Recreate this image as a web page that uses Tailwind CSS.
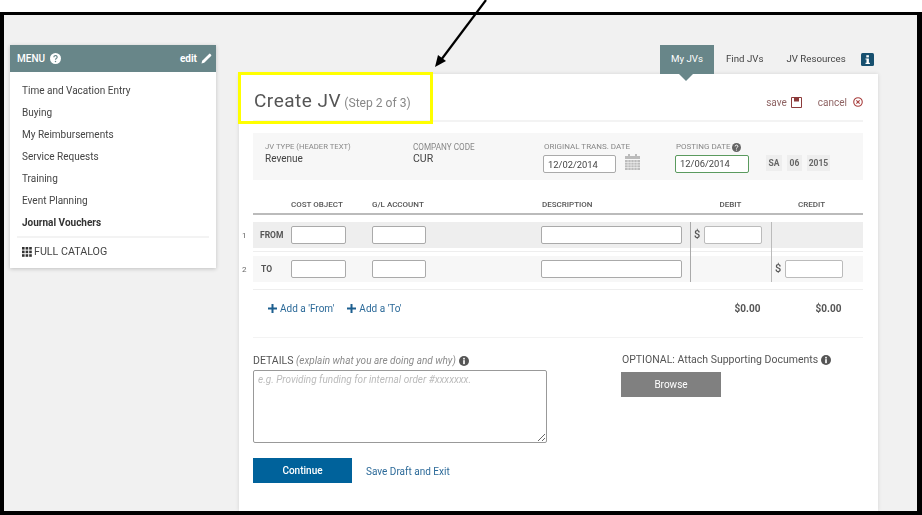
<!DOCTYPE html>
<html lang="en">
<head>
  <meta charset="UTF-8" />
  <meta name="viewport" content="width=device-width, initial-scale=1.0" />
  <title>Create JV</title>
  <script src="https://cdn.jsdelivr.net/npm/@tailwindcss/browser@4"></script>
</head>
<body class="bg-white font-['Roboto',sans-serif] text-[#444]">
<div class="relative w-[922px] h-[515px] overflow-hidden">

  <div class="mt-[12px] h-[503px] border-t-[3px] border-l-[4px] border-r-[5px] border-b-[4px] border-black bg-[#f1f1f1] flex items-start pl-[6px] pt-[30px] gap-[23px]">

    <!-- sidebar -->
    <aside class="w-[206px] bg-white shadow-[0_1px_4px_rgba(0,0,0,0.2)] blur-[0.3px]">
      <div class="h-[27px] bg-[#688689] flex items-center justify-between pl-[7px] pr-[4px] text-white text-[10px]">
        <div class="flex items-center gap-[5px]">
          <span class="font-medium">MENU</span>
          <svg class="w-[11px] h-[11px]" viewBox="0 0 12 12"><circle cx="6" cy="6" r="6" fill="#fff"/><path d="M4.2 4.6a1.8 1.8 0 1 1 2.7 1.5c-.6.4-.9.6-.9 1.3" fill="none" stroke="#688689" stroke-width="1.3"/><circle cx="6" cy="9.3" r=".8" fill="#688689"/></svg>
        </div>
        <div class="flex items-center gap-[4px] font-bold text-[10px]">
          <span>edit</span>
          <svg class="w-[11px] h-[11px]" viewBox="0 0 12 12"><path d="M0.5 11.5l.8-3L8.8 1a1 1 0 0 1 1.4 0l.8.8a1 1 0 0 1 0 1.4L3.5 10.7z" fill="#fff"/></svg>
        </div>
      </div>
      <nav class="px-[12px] pt-[8px] pb-[10px] text-[10px]">
        <ul class="leading-[22px]">
          <li>Time and Vacation Entry</li>
          <li>Buying</li>
          <li>My Reimbursements</li>
          <li>Service Requests</li>
          <li>Training</li>
          <li>Event Planning</li>
          <li class="font-bold text-[#333]">Journal Vouchers</li>
        </ul>
        <div class="border-t-2 border-[#f3f3f3] -mx-[5px] mt-[2px] pt-[8px] flex items-center gap-[2px] h-[22px] text-[10.7px]">
          <svg class="w-[10px] h-[10px] ml-[5px]" viewBox="0 0 10 10" fill="#333"><rect x="0" y="0" width="2.6" height="2.6"/><rect x="3.6" y="0" width="2.6" height="2.6"/><rect x="7.2" y="0" width="2.6" height="2.6"/><rect x="0" y="3.6" width="2.6" height="2.6"/><rect x="3.6" y="3.6" width="2.6" height="2.6"/><rect x="7.2" y="3.6" width="2.6" height="2.6"/><rect x="0" y="7.2" width="2.6" height="2.6"/><rect x="3.6" y="7.2" width="2.6" height="2.6"/><rect x="7.2" y="7.2" width="2.6" height="2.6"/></svg>
          <span>FULL CATALOG</span>
        </div>
      </nav>
    </aside>

    <!-- main column -->
    <div class="w-[639px] blur-[0.3px]">
      <div class="h-[29px] flex items-start text-[9.7px] whitespace-nowrap pl-[421px]">
        <div class="relative w-[54px] h-[29px] bg-[#688689] text-white flex items-center justify-center">
          My JVs
          <span class="absolute left-[19px] top-[29px] w-0 h-0 border-l-[7px] border-r-[7px] border-t-[7px] border-l-transparent border-r-transparent border-t-[#688689]"></span>
        </div>
        <span class="ml-[12px] h-[29px] flex items-center">Find JVs</span>
        <span class="ml-[23px] h-[29px] flex items-center">JV Resources</span>
        <svg class="ml-[15px] mt-[8px] w-[13px] h-[13px]" viewBox="0 0 13 13"><rect width="13" height="13" rx="1.5" fill="#17506f"/><rect x="5.3" y="2.2" width="2.6" height="2.2" fill="#fff"/><path d="M4.5 5.4h3.4v4.4h1v1.2H4.5V9.8h1V6.6h-1z" fill="#fff"/></svg>
      </div>

      <main class="bg-white h-[437px] pl-[14px] pr-[15px] shadow-[0_0_4px_rgba(0,0,0,0.12)]">
        <!-- title -->
        <div class="h-[48px] border-b-2 border-[#f3f3f3] flex items-center justify-between">
          <h1 class="text-[19px] text-[#555] tracking-[0.5px] ml-[1px] mt-[8px]">Create JV <span class="text-[12.1px] tracking-normal text-[#888] -ml-[2px]">(Step 2 of 3)</span></h1>
          <div class="flex items-center text-[10px] text-[#8f6464] mt-[10px]">
            <span>save</span>
            <svg class="ml-[4px] w-[11px] h-[11px]" viewBox="0 0 11 11"><path d="M.5.5h10v10H.5z" fill="#fff" stroke="#8c3b3b"/><rect x="3" y=".5" width="5" height="4" fill="#8c3b3b"/></svg>
            <span class="ml-[16px]">cancel</span>
            <svg class="ml-[6px] w-[10px] h-[10px]" viewBox="0 0 11 11"><circle cx="5.5" cy="5.5" r="4.7" fill="none" stroke="#a8403f" stroke-width="1.2"/><path d="M3.7 3.7l3.6 3.6M7.3 3.7l-3.6 3.6" stroke="#a8403f" stroke-width="1.2"/></svg>
          </div>
        </div>

        <!-- header info -->
        <div class="mt-[11px] h-[47px] bg-[#f7f7f7] flex pl-[12px] pt-[9px]">
          <div class="w-[148px]">
            <div class="text-[7.7px] leading-[10px] text-[#888]">JV TYPE (HEADER TEXT)</div>
            <div class="text-[10px] leading-[14px] text-[#444]">Revenue</div>
          </div>
          <div class="w-[130px]">
            <div class="text-[8.2px] leading-[10px] text-[#888]">COMPANY CODE</div>
            <div class="text-[10.5px] leading-[14px] text-[#444]">CUR</div>
          </div>
          <div class="w-[132px]">
            <div class="text-[8px] leading-[10px] text-[#888] ml-[1px]">ORIGINAL TRANS. DATE</div>
            <div class="flex items-start mt-[3px]">
              <div class="w-[73px] h-[18px] bg-white border border-[#aaa] rounded-[2px] text-[9.4px] pl-[4px] leading-[17px]">12/02/2014</div>
              <svg class="ml-[9px] -mt-[1px] w-[15px] h-[16px]" viewBox="0 0 15 16" fill="#bbb"><rect x="3" y="0" width="2" height="3"/><rect x="10" y="0" width="2" height="3"/><rect x="0" y="2" width="15" height="3"/><path d="M0 6h15v10H0z"/><path d="M0 8.5h15M0 11h15M0 13.5h15M3 6v10M6 6v10M9 6v10M12 6v10" stroke="#f7f7f7" stroke-width=".6"/></svg>
            </div>
          </div>
          <div>
            <div class="text-[8px] leading-[10px] text-[#888] flex items-center h-[10px] ml-[1px]">POSTING DATE
              <svg class="ml-[1px] w-[9px] h-[9px]" viewBox="0 0 12 12"><circle cx="6" cy="6" r="6" fill="#666"/><path d="M4.2 4.6a1.8 1.8 0 1 1 2.7 1.5c-.6.4-.9.6-.9 1.3" fill="none" stroke="#fff" stroke-width="1.3"/><circle cx="6" cy="9.3" r=".8" fill="#fff"/></svg>
            </div>
            <div class="flex items-start mt-[3px]">
              <div class="w-[74px] h-[18px] bg-white border border-[#5a9a5e] rounded-[2px] text-[9.4px] pl-[4px] leading-[16px]">12/06/2014</div>
              <div class="ml-[17px] w-[16px] h-[16px] bg-[#eee] text-[8.5px] font-bold text-[#666] flex items-center justify-center">SA</div>
              <div class="ml-[5px] w-[15px] h-[16px] bg-[#eee] text-[8.5px] font-bold text-[#666] flex items-center justify-center">06</div>
              <div class="ml-[5px] w-[23px] h-[16px] bg-[#eee] text-[8.5px] font-bold text-[#666] flex items-center justify-center">2015</div>
            </div>
          </div>
        </div>

        <!-- line items -->
        <div class="mt-[19px] grid grid-cols-[38px_81px_169px_149px_81px_92px] h-[14px] text-[8px] font-medium text-[#555] leading-[12px]">
          <span></span><span>COST OBJECT</span><span>G/L ACCOUNT</span><span class="pl-[1px]">DESCRIPTION</span>
          <span class="text-center">DEBIT</span><span class="text-center pr-[11px]">CREDIT</span>
        </div>
        <div class="h-[2px] bg-[#bbb]"></div>

        <div class="relative mt-[7px]">
          <span class="absolute left-[-11px] top-[8px] text-[8px] text-[#666]">1</span>
          <span class="absolute left-[-11px] top-[42px] text-[8px] text-[#666]">2</span>

          <div class="h-[26px] bg-[#eee] grid grid-cols-[38px_81px_169px_149px_81px_92px] items-center text-[8.5px] font-bold text-[#555]">
            <span class="pl-[7px]">FROM</span>
            <div class="w-[55px] h-[18px] bg-white border border-[#aaa] rounded-[2px]"></div>
            <div class="w-[54px] h-[18px] bg-white border border-[#aaa] rounded-[2px]"></div>
            <div class="w-[141px] h-[18px] bg-white border border-[#aaa] rounded-[2px]"></div>
            <div class="flex items-center pl-[4px] font-medium text-[11px]"><span class="w-[10px]">$</span><div class="w-[58px] h-[18px] bg-white border border-[#bbb] rounded-[2px]"></div></div>
            <span></span>
          </div>
          <div class="mt-[3px] h-px bg-[#eee]"></div>
          <div class="mt-[4px] h-[26px] bg-[#f7f7f7] grid grid-cols-[38px_81px_169px_149px_81px_92px] items-center text-[8.5px] font-bold text-[#555]">
            <span class="pl-[8px]">TO</span>
            <div class="w-[55px] h-[18px] bg-white border border-[#aaa] rounded-[2px]"></div>
            <div class="w-[54px] h-[18px] bg-white border border-[#aaa] rounded-[2px]"></div>
            <div class="w-[141px] h-[18px] bg-white border border-[#aaa] rounded-[2px]"></div>
            <span></span>
            <div class="flex items-center pl-[4px] font-medium text-[11px]"><span class="w-[10px]">$</span><div class="w-[58px] h-[18px] bg-white border border-[#bbb] rounded-[2px]"></div></div>
          </div>

          <span class="absolute left-[437px] top-0 bottom-0 w-px bg-[#aaa]"></span>
          <span class="absolute left-[518px] top-0 bottom-0 w-px bg-[#bbb]"></span>
        </div>

        <div class="mt-[7px] h-px bg-[#eee]"></div>

        <!-- totals -->
        <div class="grid grid-cols-[288px_149px_81px_92px] h-[48px] items-center border-b border-[#f3f3f3] text-[10px]">
          <div class="flex items-center text-[#2c6a99] pl-[15px] -mt-[11px]">
            <svg class="w-[9px] h-[9px]" viewBox="0 0 9 9"><path d="M3.5 0h2v3.5H9v2H5.5V9h-2V5.5H0v-2h3.5z" fill="#1d5f8f"/></svg>
            <span class="ml-[3px]">Add a 'From'</span>
            <svg class="ml-[13px] w-[9px] h-[9px]" viewBox="0 0 9 9"><path d="M3.5 0h2v3.5H9v2H5.5V9h-2V5.5H0v-2h3.5z" fill="#1d5f8f"/></svg>
            <span class="ml-[3px]">Add a 'To'</span>
          </div>
          <span></span>
          <span class="font-bold text-[#555] text-center -mt-[11px] pl-[34px]">$0.00</span>
          <span class="font-bold text-[#555] text-center -mt-[11px] pl-[23px]">$0.00</span>
        </div>

        <!-- details and attachments -->
        <div class="flex">
          <div class="w-[368px]">
            <div class="mt-[14px] h-[17px] flex items-center text-[10.5px] text-[#555]">
              DETAILS&nbsp;<em class="text-[#8a8a8a] text-[10px]">(explain what you are doing and why)</em>
              <svg class="ml-[3px] w-[10px] h-[10px]" viewBox="0 0 12 12"><circle cx="6" cy="6" r="6" fill="#555"/><rect x="5" y="2.2" width="2" height="2" fill="#fff"/><rect x="5" y="5" width="2" height="4.8" fill="#fff"/></svg>
            </div>
            <textarea class="block mt-[1px] w-[294px] h-[73px] bg-white border border-[#999] rounded-[2px] px-[4px] py-[1px] text-[10px] italic placeholder:text-[#bbb]" placeholder="e.g. Providing funding for internal order #xxxxxxx."></textarea>
            <div class="mt-[15px] flex items-center">
              <button class="w-[99px] h-[25px] bg-[#00629b] text-white text-[10px] font-medium">Continue</button>
              <span class="ml-[14px] mt-[2px] text-[10px] text-[#2c6a99]">Save Draft and Exit</span>
            </div>
          </div>
          <div>
            <div class="mt-[13px] h-[17px] flex items-center text-[10.5px] text-[#555] ml-[1px]">OPTIONAL: Attach Supporting Documents
              <svg class="ml-[3px] w-[10px] h-[10px]" viewBox="0 0 12 12"><circle cx="6" cy="6" r="6" fill="#555"/><rect x="5" y="2.2" width="2" height="2" fill="#fff"/><rect x="5" y="5" width="2" height="4.8" fill="#fff"/></svg>
            </div>
            <button class="mt-[4px] block w-[100px] h-[25px] bg-[#808080] text-white text-[10px]">Browse</button>
          </div>
        </div>
      </main>
    </div>
  </div>

  <!-- annotations drawn over the screenshot -->
  <div class="absolute left-[238px] top-[72px] w-[195px] h-[52px] border-[3px] border-[#ffff00]"></div>
  <svg class="absolute left-0 top-0 w-[922px] h-[515px] pointer-events-none" viewBox="0 0 922 515">
    <path d="M486 0L441 60" stroke="#000" stroke-width="2.2" fill="none"/>
    <path d="M435 67L438 55L446 61z" fill="#000"/>
  </svg>
</div>
</body>
</html>
